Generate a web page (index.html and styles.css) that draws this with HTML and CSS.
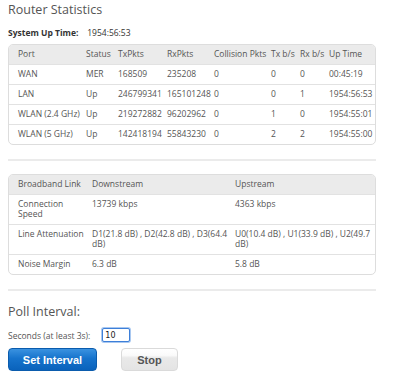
FILE: index.html
```html
<!DOCTYPE html>
<html lang="en">
<head>
    <meta charset="UTF-8">
    <meta name="viewport" content="width=device-width, initial-scale=1.0">
    <title>Router Statistics</title>
    <link rel="stylesheet" href="styles.css">
</head>
<body>
    <div class="page">
        <h1 class="title">Router Statistics</h1>
        <div class="uptime">
            <span class="uptime-label">System Up Time:</span>
            <span>1954:56:53</span>
        </div>

        <div class="table-box stats-box">
            <table class="stats">
                <colgroup>
                    <col style="width: 73px">
                    <col style="width: 32px">
                    <col style="width: 49px">
                    <col style="width: 47px">
                    <col style="width: 57px">
                    <col style="width: 29px">
                    <col style="width: 29px">
                    <col style="width: 52px">
                </colgroup>
                <thead>
                    <tr>
                        <th>Port</th>
                        <th>Status</th>
                        <th>TxPkts</th>
                        <th>RxPkts</th>
                        <th>Collision Pkts</th>
                        <th>Tx b/s</th>
                        <th>Rx b/s</th>
                        <th>Up Time</th>
                    </tr>
                </thead>
                <tbody>
                    <tr>
                        <td>WAN</td><td>MER</td><td>168509</td><td>235208</td><td>0</td><td>0</td><td>0</td><td>00:45:19</td>
                    </tr>
                    <tr>
                        <td>LAN</td><td>Up</td><td>246799341</td><td>165101248</td><td>0</td><td>0</td><td>1</td><td>1954:56:53</td>
                    </tr>
                    <tr>
                        <td>WLAN (2.4 GHz)</td><td>Up</td><td>219272882</td><td>96202962</td><td>0</td><td>1</td><td>0</td><td>1954:55:01</td>
                    </tr>
                    <tr>
                        <td>WLAN (5 GHz)</td><td>Up</td><td>142418194</td><td>55843230</td><td>0</td><td>2</td><td>2</td><td>1954:55:00</td>
                    </tr>
                </tbody>
            </table>
        </div>

        <hr class="divider">

        <div class="table-box">
            <table class="stats">
                <colgroup>
                    <col style="width: 79px">
                    <col style="width: 143px">
                    <col style="width: 146px">
                </colgroup>
                <thead>
                    <tr>
                        <th>Broadband Link</th>
                        <th>Downstream</th>
                        <th>Upstream</th>
                    </tr>
                </thead>
                <tbody>
                    <tr>
                        <td>Connection Speed</td><td>13739 kbps</td><td>4363 kbps</td>
                    </tr>
                    <tr>
                        <td>Line Attenuation</td><td>D1(21.8 dB) , D2(42.8 dB) , D3(64.4 dB)</td><td>U0(10.4 dB) , U1(33.9 dB) , U2(49.7 dB)</td>
                    </tr>
                    <tr>
                        <td>Noise Margin</td><td>6.3 dB</td><td>5.8 dB</td>
                    </tr>
                </tbody>
            </table>
        </div>

        <hr class="divider">

        <h2 class="poll-title">Poll Interval:</h2>
        <div class="poll-row">
            <label for="pollSeconds">Seconds (at least 3s):</label>
            <input type="text" id="pollSeconds" value="10">
        </div>
        <div class="buttons">
            <button type="button" class="btn btn-primary">Set Interval</button>
            <button type="button" class="btn btn-secondary">Stop</button>
        </div>
    </div>
</body>
</html>
```

FILE: styles.css
```css
body {
    margin: 0;
    background: #fff;
    font-family: "Open Sans", Arial, sans-serif;
    font-size: 8.5px;
    color: #555;
}
.page {
    width: 368px;
    padding: 0 8px;
}
.title {
    margin: 0;
    padding-top: 2px;
    font-size: 12.5px;
    line-height: 16px;
    font-weight: 400;
    color: #555;
}
.uptime {
    margin-top: 9px;
    line-height: 11px;
    color: #333;
}
.uptime-label {
    display: inline-block;
    width: 77px;
    font-weight: 700;
}
.table-box {
    border: 1px solid #ddd;
    border-radius: 5px;
    overflow: hidden;
    margin-top: 6px;
}
.stats {
    width: 100%;
    border-collapse: collapse;
    table-layout: fixed;
}
.stats th,
.stats td {
    padding: 4px 0 5px 4px;
    line-height: 10px;
    text-align: left;
    vertical-align: top;
    font-weight: 400;
}
.stats th:first-child,
.stats td:first-child {
    padding-left: 9px;
}
.stats th {
    background: #ebebeb;
}
.stats td {
    border-top: 1px solid #e2e2e2;
}
.divider {
    margin: 14px 0 13px;
    border: none;
    height: 2px;
    background: #ebebeb;
}
.divider + .table-box {
    margin-top: 0;
}
.poll-title {
    margin: 0;
    font-size: 12.5px;
    line-height: 16px;
    font-weight: 400;
    color: #555;
}
.poll-row {
    display: flex;
    align-items: center;
    gap: 12px;
    margin-top: 7px;
    height: 16px;
}
.poll-row input {
    width: 22px;
    height: 12px;
    padding: 0 2px;
    margin: 0;
    border: 1px solid #3d7fd9;
    border-radius: 2px;
    box-shadow: 0 0 0 1px #a9c8f0;
    font-family: "DejaVu Sans", sans-serif;
    font-size: 8px;
    color: #222;
    outline: none;
}
.buttons {
    display: flex;
    gap: 24px;
    margin-top: 5px;
}
.btn {
    height: 23px;
    border-radius: 4px;
    font-family: "Liberation Sans", Arial, sans-serif;
    font-size: 11px;
    font-weight: 700;
    padding: 0;
    cursor: pointer;
}
.btn-primary {
    width: 89px;
    color: #fff;
    border: 1px solid #0b5cad;
    background: linear-gradient(#3a92e0 0%, #1673cc 45%, #0a62bb 100%);
}
.btn-secondary {
    width: 57px;
    color: #555;
    border: 1px solid #dadada;
    background: linear-gradient(#ffffff 0%, #fafafa 30%, #e9e9e9 42%, #e4e4e4 100%);
}
```
